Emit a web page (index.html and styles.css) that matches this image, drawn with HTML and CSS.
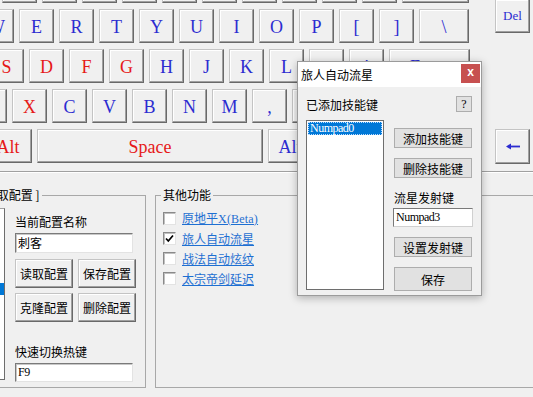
FILE: index.html
```html
<!DOCTYPE html>
<html lang="zh-CN">
<head>
<meta charset="utf-8">
<title>旅人自动流星</title>
<link rel="stylesheet" href="styles.css">
</head>
<body>
<div class="top">
  <div class="kb">
    <div class="row r0">
      <div class="key"></div><div class="key"></div><div class="key"></div><div class="key"></div><div class="key"></div>
      <div class="key"></div><div class="key"></div><div class="key"></div><div class="key"></div><div class="key"></div>
      <div class="key w67"></div>
    </div>
    <div class="row r1">
      <div class="key">Q</div><div class="key">W</div><div class="key">E</div><div class="key">R</div><div class="key">T</div>
      <div class="key">Y</div><div class="key">U</div><div class="key">I</div><div class="key">O</div><div class="key">P</div>
      <div class="key">[</div><div class="key">]</div><div class="key w50">\</div>
    </div>
    <div class="row r2">
      <div class="key">A</div><div class="key red">S</div><div class="key red">D</div><div class="key red">F</div><div class="key red">G</div>
      <div class="key">H</div><div class="key">J</div><div class="key">K</div><div class="key">L</div><div class="key">;</div>
      <div class="key">'</div><div class="key w81">Enter</div>
    </div>
    <div class="row r3">
      <div class="key">Z</div><div class="key red">X</div><div class="key">C</div><div class="key">V</div><div class="key">B</div>
      <div class="key">N</div><div class="key">M</div><div class="key">,</div><div class="key">.</div><div class="key">/</div>
      <div class="key w98">Shift</div>
    </div>
    <div class="row r4">
      <div class="key red w48">Alt</div><div class="key red w226">Space</div><div class="key w52 ralt">Alt</div>
      <div class="key w70">Ctrl</div><div class="key w70">Menu</div>
    </div>
  </div>
  <div class="side">
    <div class="key del">Del</div>
    <div class="key arrow"><svg width="14" height="7" viewBox="0 0 14 7"><polygon points="0,3.5 5,0.5 5,6.5" fill="#2c2cd0"/><rect x="4" y="2.6" width="10" height="1.8" fill="#2c2cd0"/></svg></div>
  </div>
</div>
<div class="sep"></div>
<div class="lower">
  <fieldset class="group g-config">
    <legend>[ 读取配置 ]</legend>
    <div class="cfg">
      <div class="plist">
        <div class="pitem">默认</div>
        <div class="pitem">战士</div>
        <div class="pitem">法师</div>
        <div class="pitem">弓手</div>
        <div class="pitem">枪手</div>
        <div class="pitem">术士</div>
        <div class="pitem sel">刺客</div>
      </div>
      <div class="form">
        <div class="lbl l1">当前配置名称</div>
        <div class="tb tb1">刺客</div>
        <div class="btns">
          <div class="cbtn">读取配置</div>
          <div class="cbtn">保存配置</div>
          <div class="cbtn">克隆配置</div>
          <div class="cbtn">删除配置</div>
        </div>
        <div class="lbl l2">快速切换热键</div>
        <div class="tb tb2 latin">F9</div>
      </div>
    </div>
  </fieldset>
  <fieldset class="group g-other">
    <legend>其他功能</legend>
    <div class="chk"><span class="box"></span><a class="lnk">原地平<span class="latin wide">X(Beta)</span></a></div>
    <div class="chk"><span class="box"><svg width="11" height="11" viewBox="0 0 11 11"><polyline points="2,5.5 4.3,8 9,2.5" fill="none" stroke="#000" stroke-width="1.7"/></svg></span><a class="lnk">旅人自动流星</a></div>
    <div class="chk"><span class="box"></span><a class="lnk">战法自动炫纹</a></div>
    <div class="chk"><span class="box"></span><a class="lnk">太宗帝剑延迟</a></div>
  </fieldset>
</div>

<div class="dialog">
  <div class="dtitle">
    <span class="dtext">旅人自动流星</span>
    <span class="close">x</span>
  </div>
  <div class="dbody">
    <div class="dhead">
      <span>已添加技能键</span>
      <span class="qbtn">?</span>
    </div>
    <div class="dmain">
      <div class="klist">
        <div class="kitem latin">Numpad0</div>
      </div>
      <div class="dcol">
        <div class="dbtn b1">添加技能键</div>
        <div class="dbtn b2">删除技能键</div>
        <div class="lbl l3">流星发射键</div>
        <div class="dtb latin">Numpad3</div>
        <div class="dbtn b3">设置发射键</div>
        <div class="dbtn b4">保存</div>
      </div>
    </div>
  </div>
</div>
</body>
</html>
```
FILE: styles.css
```css
* { box-sizing: border-box; }
html, body { margin: 0; padding: 0; }
body {
  width: 533px;
  height: 397px;
  overflow: hidden;
  position: relative;
  background: #f0f0f0;
  font-family: "Noto Sans CJK SC", sans-serif;
  font-size: 12px;
  color: #000;
}
.latin {
  font-family: "Liberation Serif", serif;
  font-size: 12px;
  letter-spacing: -0.5px;
}
.latin.wide { letter-spacing: 0.2px; }

/* keyboard */
.top { display: flex; height: 164px; }
.kb {
  width: 495px;
  flex: none;
  margin-top: -31px;
  display: flex;
  flex-direction: column;
  gap: 6px;
}
.row { display: flex; gap: 5px; height: 34px; flex: none; }
.r0 { margin-left: 2px; }
.r1 { margin-left: -61px; }
.r2 { margin-left: -51px; }
.r3 { margin-left: -28px; }
.r4 { margin-left: -16px; }
.key {
  flex: none;
  width: 35px;
  height: 34px;
  background: #f0f0f0;
  border: 1px solid;
  border-color: #c4c4c4 #696969 #696969 #c4c4c4;
  box-shadow: inset -1px -1px 0 #a0a0a0, inset 1px 1px 0 #fff;
  display: flex;
  align-items: center;
  justify-content: center;
  padding-top: 2px;
  font-family: "Liberation Serif", serif;
  font-size: 18px;
  color: #2c2cd0;
  white-space: nowrap;
}
.key.red { color: #e61919; }
.w48 { width: 48px; }
.w50 { width: 50px; }
.w52 { width: 52px; }
.w67 { width: 67px; }
.w70 { width: 70px; }
.w81 { width: 81px; }
.w98 { width: 98px; }
.w226 { width: 226px; }
.key.ralt { padding-right: 8px; }
.side {
  display: flex;
  flex-direction: column;
  margin-top: -1px;
  gap: 96px;
}
.key.del { height: 34px; font-size: 13px; padding-top: 0; padding-bottom: 1px; }
.key.arrow { height: 35px; padding-top: 0; }

.sep {
  height: 2px;
  margin-top: 7px;
  border-top: 1px solid #a0a0a0;
  border-bottom: 1px solid #fff;
}

/* lower groups */
.lower { display: flex; margin-top: 15px; gap: 9px; }
.group {
  margin: 0;
  min-width: 0;
  height: 200px;
  border: 1px solid #a8a8a8;
  flex: none;
}
.group legend {
  font-size: 12px;
  line-height: 14px;
  padding: 0 2px;
  white-space: nowrap;
}
.g-config {
  margin-left: -37px;
  width: 183px;
  padding: 6px 10px 0 8px;
}
.g-config legend { margin-left: 4px; }
.g-other {
  width: 400px;
  padding: 6px 0 0 5px;
}
.cfg { display: flex; gap: 10px; }
.plist {
  width: 33px;
  height: 172px;
  background: #fff;
  border: 1px solid;
  border-color: #a0a0a0 #6d6d6d #6d6d6d #a0a0a0;
  padding-top: 2px;
  overflow: hidden;
}
.pitem { height: 12px; line-height: 12px; white-space: nowrap; padding-left: 2px; overflow: hidden; }
.pitem.sel { background: #0078d7; color: #fff; }
.form { width: 120px; display: flex; flex-direction: column; }
.lbl { line-height: 14px; height: 14px; white-space: nowrap; }
.l1 { margin-top: 7px; }
.tb {
  width: 118px;
  height: 20px;
  background: #fff;
  border: 1px solid;
  border-color: #7a7a7a #e3e3e3 #e3e3e3 #7a7a7a;
  box-shadow: inset 1px 1px 0 #c8c8c8;
  padding-left: 2px;
  line-height: 18px;
}
.tb1 { margin-top: 4px; }
.btns {
  margin-top: 6px;
  display: grid;
  grid-template-columns: 58px 58px;
  grid-auto-rows: 29px;
  gap: 5px;
}
.cbtn {
  background: #f0f0f0;
  border: 1px solid;
  border-color: #c4c4c4 #696969 #696969 #c4c4c4;
  box-shadow: inset -1px -1px 0 #a0a0a0, inset 1px 1px 0 #fff;
  display: flex;
  align-items: center;
  justify-content: center;
}
.l2 { margin-top: 23px; }
.tb2 { margin-top: 4px; height: 19px; line-height: 17px; }

.chk { display: flex; align-items: center; height: 20px; padding-left: 2px; }
.chk:first-child { height: 19px; }
.box {
  width: 13px;
  height: 13px;
  background: #fff;
  border: 1px solid;
  border-color: #8a8a8a #e3e3e3 #e3e3e3 #8a8a8a;
  box-shadow: inset 1px 1px 0 #c0c0c0;
  margin-right: 6px;
  display: flex;
  align-items: center;
  justify-content: center;
}
.lnk { color: #1e6fd2; text-decoration: underline; white-space: nowrap; }

/* dialog */
.dialog {
  position: absolute;
  left: 297px;
  top: 61px;
  width: 185px;
  height: 235px;
  background: #f0f0f0;
  border: 1px solid #9b9b9b;
  box-shadow: 0 2px 8px rgba(0,0,0,0.28);
}
.dtitle {
  height: 25px;
  background: #fff;
  display: flex;
  justify-content: space-between;
  align-items: flex-start;
}
.dtext { padding-left: 3px; line-height: 25px; }
.close {
  width: 19px;
  height: 19px;
  margin: 2px 1px 0 0;
  background: #c75050;
  color: #fff;
  font-family: "Liberation Sans", sans-serif;
  font-weight: bold;
  font-size: 12px;
  line-height: 17px;
  text-align: center;
}
.dbody { padding: 9px 9px 0 8px; }
.dhead {
  display: flex;
  justify-content: space-between;
  align-items: center;
  height: 16px;
}
.qbtn {
  width: 16px;
  height: 16px;
  background: #e1e1e1;
  border: 1px solid #adadad;
  font-family: "Liberation Serif", serif;
  font-size: 12px;
  line-height: 14px;
  text-align: center;
}
.dmain { display: flex; gap: 10px; margin-top: 8px; }
.klist {
  width: 78px;
  height: 170px;
  background: #fff;
  border: 1px solid #6e6e6e;
  padding: 1px;
}
.kitem {
  height: 13px;
  line-height: 11px;
  background: #0078d7;
  color: #fff;
  border: 1px dotted #bcdcff;
  padding-left: 1px;
}
.dcol { width: 78px; display: flex; flex-direction: column; }
.dbtn {
  background: #e1e1e1;
  border: 1px solid #adadad;
  display: flex;
  align-items: center;
  justify-content: center;
  height: 20px;
}
.b1 { margin-top: 8px; }
.b2 { margin-top: 10px; }
.l3 { margin-top: 13px; }
.dtb {
  margin-top: 3px;
  margin-left: -1px;
  width: 80px;
  height: 19px;
  background: #fff;
  border: 1px solid;
  border-color: #7a7a7a #d0d0d0 #d0d0d0 #7a7a7a;
  line-height: 17px;
  padding-left: 2px;
}
.b3 { margin-top: 10px; }
.b4 { margin-top: 10px; height: 24px; }
```
